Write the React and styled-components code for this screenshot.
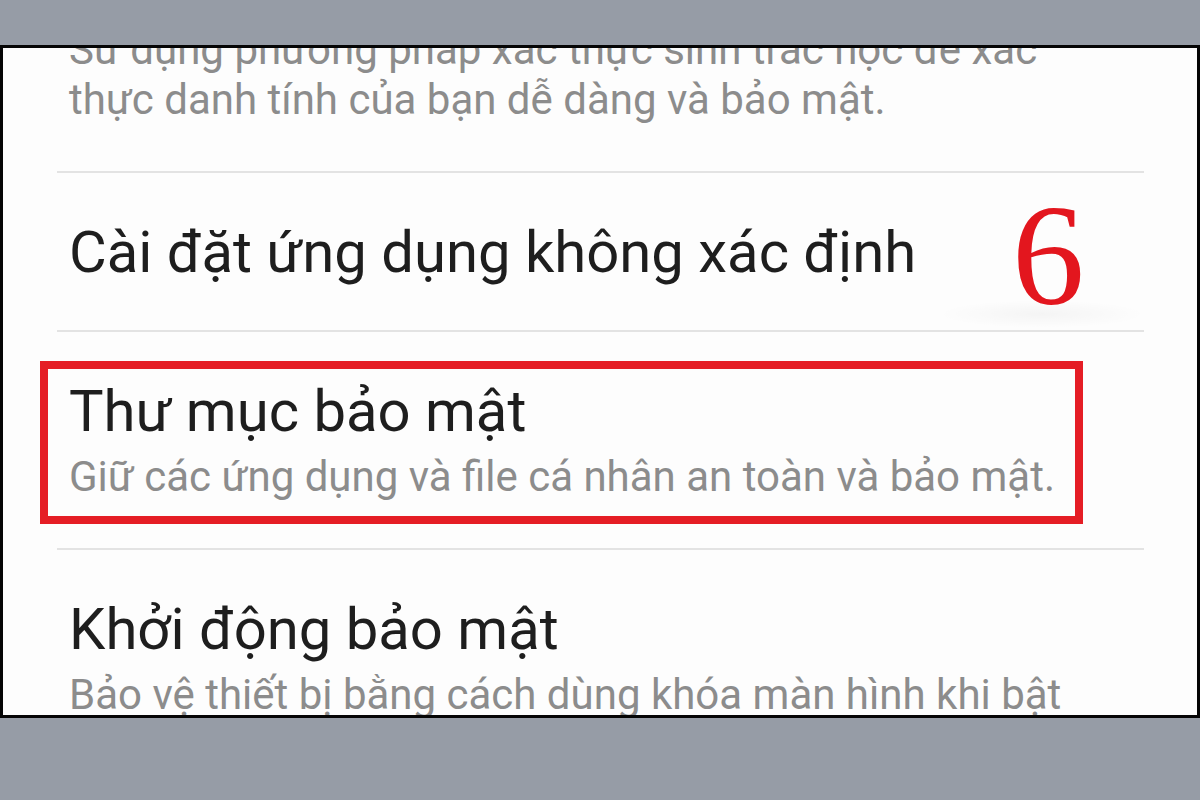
import React from "react"
import styled, { createGlobalStyle } from "styled-components"

const GlobalStyle = createGlobalStyle`
  html, body {
    margin: 0;
    padding: 0;
    background: #969ca6;
  }
  body {
    font-family: Roboto, "Noto Sans", "Liberation Sans", sans-serif;
  }
`

const Page = styled.div`
  width: 1200px;
  height: 800px;
  padding-top: 45px;
  box-sizing: border-box;
`

const Panel = styled.div`
  width: 1200px;
  height: 673px;
  box-sizing: border-box;
  border: 3px solid #050505;
  background: #fdfdfd;
  overflow: hidden;
`

const List = styled.div`
  display: flex;
  flex-direction: column;
  margin-top: -23px;
`

const Row = styled.div`
  position: relative;
  display: flex;
  flex-direction: column;
  gap: 9px;
  padding: ${(p) => (p.$top ? "0 0 46px" : "47px 0 46px")};
  padding-left: 66px;
`

const Divider = styled.div`
  height: 2px;
  margin: 0 53px 0 54px;
  background: #e3e3e3;
`

const Title = styled.div`
  font-size: 58px;
  line-height: 64px;
  color: #1e1e1e;
  white-space: nowrap;
`

const Summary = styled.div`
  font-size: 42px;
  line-height: 50px;
  color: #8c8c8c;
  white-space: nowrap;
`

const Highlight = styled.div`
  position: absolute;
  top: 29px;
  bottom: 24px;
  left: 37px;
  width: 1043px;
  box-sizing: border-box;
  border: 8px solid #e51d25;
  pointer-events: none;
`

const StepNumber = styled.div`
  position: absolute;
  top: 10px;
  left: 1009px;
  font-family: "Liberation Serif", "DejaVu Serif", serif;
  font-size: 145px;
  line-height: 1;
  color: #e3161e;
`

const Smudge = styled.div`
  position: absolute;
  right: 50px;
  bottom: 2px;
  width: 210px;
  height: 28px;
  border-radius: 50%;
  background: radial-gradient(ellipse at center, rgba(0, 0, 0, 0.035), rgba(0, 0, 0, 0) 70%);
  pointer-events: none;
`

const items = [
  {
    summary: [
      "Sử dụng phương pháp xác thực sinh trắc học để xác",
      "thực danh tính của bạn dễ dàng và bảo mật.",
    ],
  },
  { title: "Cài đặt ứng dụng không xác định", step: "6" },
  {
    title: "Thư mục bảo mật",
    summary: ["Giữ các ứng dụng và file cá nhân an toàn và bảo mật."],
    highlighted: true,
  },
  {
    title: "Khởi động bảo mật",
    summary: ["Bảo vệ thiết bị bằng cách dùng khóa màn hình khi bật", "thiết bị."],
  },
]

export default function App() {
  return (
    <Page>
      <GlobalStyle />
      <Panel>
        <List>
          {items.map((item, i) => (
            <React.Fragment key={i}>
              {i > 0 && <Divider />}
              <Row $top={i === 0}>
                {item.title && <Title>{item.title}</Title>}
                {item.summary && (
                  <Summary>
                    {item.summary.map((line) => (
                      <div key={line}>{line}</div>
                    ))}
                  </Summary>
                )}
                {item.step && (
                  <>
                    <Smudge />
                    <StepNumber>{item.step}</StepNumber>
                  </>
                )}
                {item.highlighted && <Highlight />}
              </Row>
            </React.Fragment>
          ))}
        </List>
      </Panel>
    </Page>
  )
}
